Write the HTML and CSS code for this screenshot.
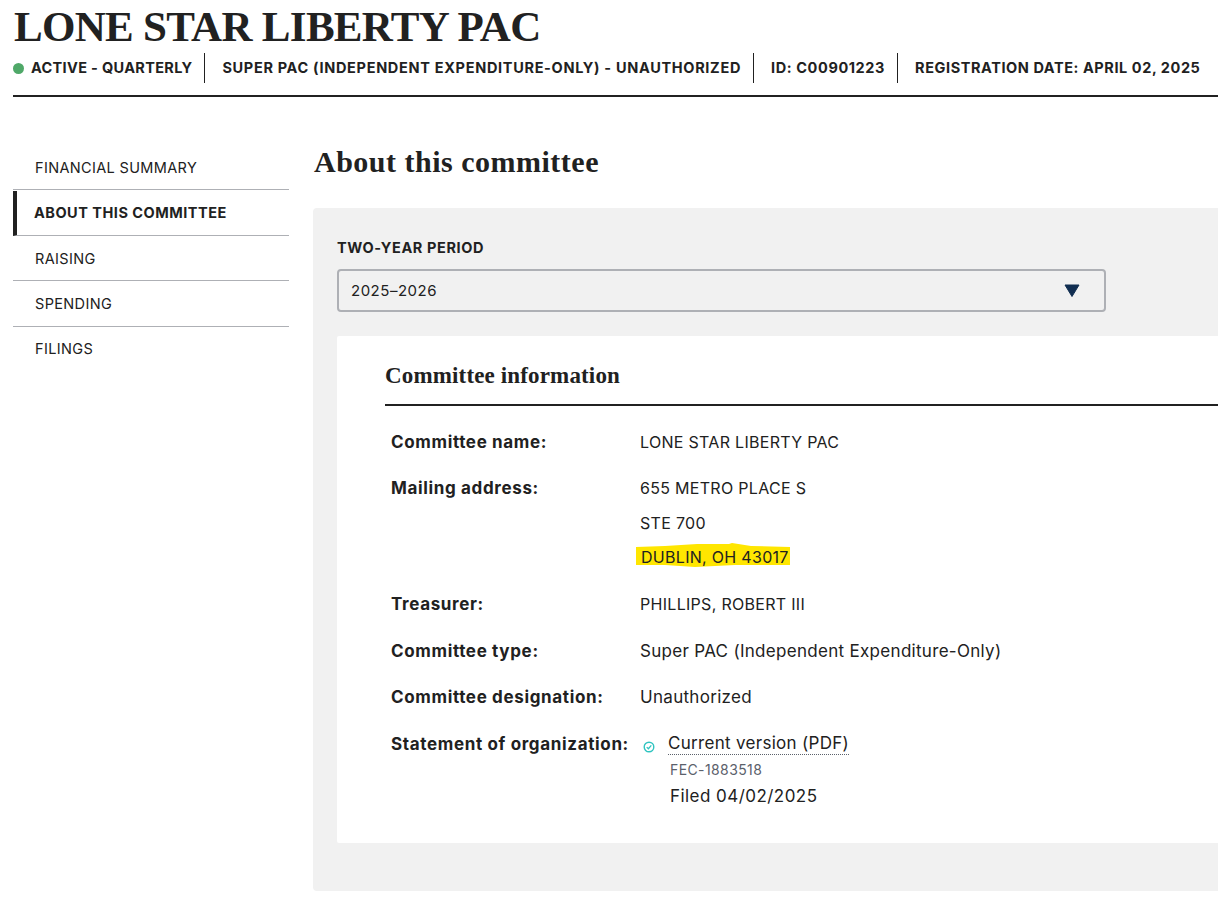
FILE: index.html

```html
<!DOCTYPE html>
<html lang="en">
<head>
  <meta charset="UTF-8" />
  <title>LONE STAR LIBERTY PAC</title>
  <link rel="stylesheet" href="styles.css">
</head>
<body>
  <header class="page-header">
    <h1>LONE STAR LIBERTY PAC</h1>
    <div class="meta">
      <div class="meta-item first"><span class="dot"></span>ACTIVE - QUARTERLY</div>
      <div class="meta-item">SUPER PAC (INDEPENDENT EXPENDITURE-ONLY) - UNAUTHORIZED</div>
      <div class="meta-item id">ID: C00901223</div>
      <div class="meta-item last">REGISTRATION DATE: APRIL 02, 2025</div>
    </div>
  </header>

  <div class="layout">
    <nav class="side-nav">
      <a class="nav-item">FINANCIAL SUMMARY</a>
      <a class="nav-item active">ABOUT THIS COMMITTEE</a>
      <a class="nav-item">RAISING</a>
      <a class="nav-item">SPENDING</a>
      <a class="nav-item">FILINGS</a>
    </nav>

    <main class="content">
      <h2>About this committee</h2>
      <section class="panel">
        <div class="select-label">TWO-YEAR PERIOD</div>
        <div class="select">
          <span>2025–2026</span>
          <svg class="caret" width="16" height="13" viewBox="0 0 16 13"><path d="M1 1h14L8 12.500z" fill="#112e51" stroke="#112e51" stroke-width="1" stroke-linejoin="round"/></svg>
        </div>

        <div class="card">
          <h3>Committee information</h3>
          <div class="rows">
            <div class="row">
              <div class="row-label">Committee name:</div>
              <div class="row-value caps">LONE STAR LIBERTY PAC</div>
            </div>
            <div class="row">
              <div class="row-label">Mailing address:</div>
              <div class="row-value caps address">
                <div>655 METRO PLACE S</div>
                <div>STE 700</div>
                <div class="marked">
                  <svg class="marker" width="156" height="24" viewBox="0 0 156 24"><path d="M1 4 30 3 62 1 94 1 97 0 116 3 155 4 155 22 100 22 60 24 30 22 1 22z" fill="#ffe600"/></svg>
                  <span class="marked-text">DUBLIN, OH 43017</span>
                </div>
              </div>
            </div>
            <div class="row">
              <div class="row-label">Treasurer:</div>
              <div class="row-value caps">PHILLIPS, ROBERT III</div>
            </div>
            <div class="row">
              <div class="row-label">Committee type:</div>
              <div class="row-value">Super PAC (Independent Expenditure-Only)</div>
            </div>
            <div class="row">
              <div class="row-label">Committee designation:</div>
              <div class="row-value">Unauthorized</div>
            </div>
            <div class="row">
              <div class="row-label">Statement of organization:</div>
              <div class="row-value statement">
                <svg class="check" width="12" height="12" viewBox="0 0 12 12"><circle cx="6" cy="6" r="4.800" fill="none" stroke="#2fc4c0" stroke-width="1.400"/><path d="M3.700 6.100 5.400 7.700 8.300 4.400" fill="none" stroke="#2fc4c0" stroke-width="1.300"/></svg>
                <div class="doc">
                  <a class="doc-link">Current version (PDF)</a>
                  <div class="doc-id">FEC-1883518</div>
                  <div class="doc-date">Filed 04/02/2025</div>
                </div>
              </div>
            </div>
          </div>
        </div>
      </section>
    </main>
  </div>
</body>
</html>
```

FILE: styles.css

```css
html {
  overflow: hidden;
}
body {
  margin: 0;
  padding: 0 0 16px 13px;
  font-family: "Inter", "Liberation Sans", sans-serif;
  font-size: 16px;
  color: #212121;
  background: #fff;
}
h1, h2, h3 {
  font-family: "Liberation Serif", serif;
  font-weight: bold;
  margin: 0;
}
h1 {
  font-size: 43px;
  line-height: 53px;
  letter-spacing: -0.7px;
  padding-left: 1px;
}
.page-header {
  border-bottom: 2px solid #212121;
  height: 95px;
}
.meta {
  display: flex;
  font-size: 14.500px;
  font-weight: 700;
  letter-spacing: 0.68px;
}
.meta-item {
  display: flex;
  align-items: center;
  box-sizing: border-box;
  height: 30px;
  padding: 0 12px 2px 17px;
  border-right: 1px solid #212121;
}
.meta-item.first {
  padding-left: 0;
  letter-spacing: 0.33px;
}
.meta-item.id {
  letter-spacing: 0.6px;
}
.meta-item.last {
  border-right: 0;
  letter-spacing: 0.57px;
}
.dot {
  width: 11px;
  height: 11px;
  border-radius: 50%;
  background: #4fa868;
  margin: 2px 7px 0 0;
}
.layout {
  display: flex;
  margin-top: 48px;
}
.side-nav {
  width: 276px;
  flex-shrink: 0;
  padding-top: 0.400px;
  font-size: 14.500px;
  letter-spacing: 0.35px;
}
.nav-item {
  display: block;
  height: 45px;
  line-height: 45px;
  padding-left: 22px;
  border-bottom: 1px solid #aeb0b5;
  box-sizing: border-box;
  margin-bottom: 0.500px;
}
.nav-item:nth-child(n+4) {
  line-height: 44px;
}
.nav-item:last-child {
  border-bottom: 0;
}
.nav-item.active {
  font-weight: 700;
  letter-spacing: 0.5px;
  padding-left: 17px;
  border-left: 4px solid #212121;
  line-height: 44px;
}
.content {
  margin-left: 24px;
  width: 960px;
  flex-shrink: 0;
}
h2 {
  font-size: 30px;
  line-height: 34px;
  letter-spacing: 0.5px;
  margin: 0 0 29px 1px;
}
.panel {
  background: #f1f1f1;
  border-radius: 4px;
  padding: 30px 0 48px 24px;
}
.select-label {
  font-size: 14.500px;
  font-weight: 700;
  letter-spacing: 0.6px;
  line-height: 20px;
  margin-bottom: 11px;
}
.select {
  display: flex;
  align-items: center;
  justify-content: space-between;
  box-sizing: border-box;
  width: 769px;
  height: 43px;
  border: 2px solid #aeb0b5;
  border-radius: 4px;
  padding: 0 24px 0 12px;
  font-size: 15px;
  letter-spacing: 0.5px;
}
.card {
  background: #fff;
  margin-top: 24px;
  padding: 24px 0 35px 48px;
  border-radius: 2px 0 0 2px;
}
h3 {
  font-size: 23px;
  line-height: 31px;
  letter-spacing: 0.15px;
  padding-bottom: 13px;
  border-bottom: 2px solid #212121;
}
.rows {
  padding: 23.750px 0 0 6px;
}
.row {
  display: flex;
  margin-bottom: 22.600px;
  font-size: 17px;
  letter-spacing: 0.3px;
  line-height: 24px;
}
.row:last-child {
  margin-bottom: 0;
}
.row-label {
  width: 249px;
  flex-shrink: 0;
  font-weight: 700;
  letter-spacing: 0.65px;
}
.caps {
  font-size: 16px;
}
.address div + div {
  margin-top: 10.500px;
}
.marked {
  position: relative;
}
.marker {
  position: absolute;
  left: -5px;
  top: -2px;
}
.marked-text {
  position: relative;
  left: 1px;
}
.statement {
  display: flex;
}
.check {
  margin: 9px 13px 0 3px;
}
.doc {
  margin-top: -1px;
}
.doc-link {
  display: inline-block;
  line-height: 21px;
  border-bottom: 1px dotted #5b616b;
}
.doc-id {
  font-size: 14px;
  letter-spacing: 0.4px;
  color: #5b616b;
  line-height: 20px;
  margin: 5px 0 0 2px;
}
.doc-date {
  letter-spacing: 0.45px;
  line-height: 24px;
  margin: 4px 0 0 2px;
}
```
